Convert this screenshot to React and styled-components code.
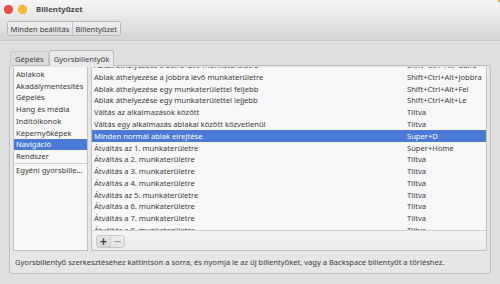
import React from "react";
import styled, { createGlobalStyle } from "styled-components";

const Global = createGlobalStyle`
  html, body { margin: 0; padding: 0; }
  body {
    width: 500px; height: 284px; overflow: hidden;
    background: #dfdfdf;
    font-family: "Noto Sans", "DejaVu Sans", sans-serif;
  }
`;

const Window = styled.div`
  width: 500px;
  height: 284px;
  display: flex;
  flex-direction: column;
  background: #dfdfdf;
  color: #3c3c3c;
  font-size: 7.6px;
  position: relative;
  overflow: hidden;
`;

const Header = styled.header`
  height: 41px;
  box-sizing: border-box;
  background: linear-gradient(#f6f6f6, #d4d4d4);
  border-bottom: 1px solid #c6c6c6;
  display: flex;
  flex-direction: column;
  padding: 4px 0 0 4px;
`;

const TitleRow = styled.div`
  display: flex;
  align-items: center;
  height: 10px;
  gap: 5px;
`;

const Dot = styled.span`
  width: 9px;
  height: 9px;
  border-radius: 50%;
  background: ${(p) => p.$color};
  box-shadow: inset 0 0 0 0.5px rgba(0,0,0,0.15);
`;

const Title = styled.span`
  font-weight: bold;
  color: #4a4a4a;
  font-size: 7.8px;
  margin-left: 4px;
`;

const Crumbs = styled.div`
  display: flex;
  margin-top: 7px;
  margin-left: 3px;
  height: 15px;
  align-self: flex-start;
  border: 1px solid #b9b9b9;
  border-radius: 3px;
  box-sizing: border-box;
  overflow: hidden;
`;

const Crumb = styled.button`
  all: unset;
  padding: 0 2.5px;
  display: flex;
  align-items: center;
  font-family: inherit;
  font-size: 7.6px;
  color: #3c3c3c;
  background: linear-gradient(#efefef, #dedede);
  & + & { border-left: 1px solid #c4c4c4; }
`;

const Content = styled.main`
  flex: 1;
  display: flex;
  flex-direction: column;
  padding: 8px 9px 10px 9px;
`;

const Tabs = styled.div`
  display: flex;
  align-items: flex-end;
  height: 16px;
  padding-left: 1px;
`;

const Tab = styled.div`
  height: ${(p) => (p.$active ? 16 : 14)}px;
  box-sizing: border-box;
  padding: 0 4px;
  display: flex;
  align-items: center;
  border: 1px solid ${(p) => (p.$active ? "#bcbcbc" : "#c8c8c8")};
  border-bottom: none;
  border-radius: 3px 3px 0 0;
  background: ${(p) => (p.$active ? "#e9e9e9" : "#dcdcdc")};
  color: #3c3c3c;
  margin-bottom: ${(p) => (p.$active ? -1 : 0)}px;
  position: relative;
  z-index: ${(p) => (p.$active ? 2 : 1)};
`;

const Frame = styled.section`
  flex: 1;
  border: 1px solid #bcbcbc;
  border-radius: 3px;
  background: #e6e6e6;
  display: flex;
  flex-direction: column;
  padding: 1px 3px 0 3px;
`;

const Panes = styled.div`
  display: flex;
  gap: 3px;
  height: 184px;
`;

const SideList = styled.ul`
  list-style: none;
  margin: 0;
  padding: 1px 0 0 0;
  width: 75px;
  box-sizing: border-box;
  background: #f7f7f7;
  border: 1px solid #c2c2c2;
  border-top: none;
  overflow: hidden;
`;

const SideItem = styled.li`
  height: 11.75px;
  display: flex;
  align-items: center;
  padding-left: 2px;
  white-space: nowrap;
  overflow: hidden;
  background: ${(p) => (p.$selected ? "#4a7ad6" : "transparent")};
  color: ${(p) => (p.$selected ? "#ffffff" : "#3c3c3c")};
`;

const SideSep = styled.li`
  height: 1px;
  background: #d0d0d0;
  margin: 0.5px 0;
`;

const MainPane = styled.div`
  flex: 1;
  display: flex;
  flex-direction: column;
  border: 1px solid #c2c2c2;
  border-top: none;
`;

const ListBox = styled.div`
  height: 164px;
  background: #f7f7f7;
  overflow: hidden;
  border-bottom: 1px solid #cfcfcf;
  box-sizing: border-box;
`;

const Rows = styled.div`
  margin-top: -7.7px;
`;

const Row = styled.div`
  height: 11.77px;
  display: grid;
  grid-template-columns: 313px 1fr;
  align-items: center;
  padding-left: 2px;
  white-space: nowrap;
  background: ${(p) => (p.$selected ? "#4a7ad6" : "transparent")};
  color: ${(p) => (p.$selected ? "#ffffff" : "#3c3c3c")};
`;

const Cell = styled.span`
  overflow: hidden;
`;

const Toolbar = styled.div`
  flex: 1;
  background: linear-gradient(#f3f3f3, #ececec);
  display: flex;
  align-items: center;
  padding-left: 4px;
`;

const BtnGroup = styled.div`
  display: flex;
  border: 1px solid #c8c8c8;
  border-radius: 3px;
  overflow: hidden;
  height: 13px;
  box-sizing: border-box;
  margin-top: 1px;
`;

const ToolBtn = styled.button`
  all: unset;
  width: 13px;
  display: flex;
  align-items: center;
  justify-content: center;
  background: ${(p) => (p.$dim ? "linear-gradient(#ececec,#e2e2e2)" : "linear-gradient(#e6e6e6,#d6d6d6)")};
  color: ${(p) => (p.$dim ? "#a0a0a0" : "#3a3a3a")};
  font-family: "DejaVu Sans", sans-serif;
  font-size: 10px;
  font-weight: bold;
  & + & { border-left: 1px solid #d0d0d0; }
`;

const Help = styled.p`
  margin: 0;
  flex: 1;
  display: flex;
  align-items: center;
  padding-left: 2px;
  color: #3c3c3c;
  font-size: 7.55px;
`;

const Corner = styled.span`
  position: absolute;
  top: 0;
  right: 0;
  width: 2px;
  height: 2px;
  background: #f0a040;
`;

const categories = [
  "Ablakok",
  "Akadálymentesítés",
  "Gépelés",
  "Hang és média",
  "Indítóikonok",
  "Képernyőképek",
  "Navigáció",
  "Rendszer",
];

const rows = [
  ["Ablak áthelyezése a balra lévő munkaterületre", "Shift+Ctrl+Alt+Balra"],
  ["Ablak áthelyezése a jobbra lévő munkaterületre", "Shift+Ctrl+Alt+Jobbra"],
  ["Ablak áthelyezése egy munkaterülettel feljebb", "Shift+Ctrl+Alt+Fel"],
  ["Ablak áthelyezése egy munkaterülettel lejjebb", "Shift+Ctrl+Alt+Le"],
  ["Váltás az alkalmazások között", "Tiltva"],
  ["Váltás egy alkalmazás ablakai között közvetlenül", "Tiltva"],
  ["Minden normál ablak elrejtése", "Super+D", true],
  ["Átváltás az 1. munkaterületre", "Super+Home"],
  ["Átváltás a 2. munkaterületre", "Tiltva"],
  ["Átváltás a 3. munkaterületre", "Tiltva"],
  ["Átváltás a 4. munkaterületre", "Tiltva"],
  ["Átváltás az 5. munkaterületre", "Tiltva"],
  ["Átváltás a 6. munkaterületre", "Tiltva"],
  ["Átváltás a 7. munkaterületre", "Tiltva"],
  ["Átváltás a 8. munkaterületre", "Tiltva"],
];

export default function App() {
  return (
    <Window>
      <Global />
      <Corner />
      <Header>
        <TitleRow>
          <Dot $color="#ef4b45" />
          <Dot $color="#f7bb2f" />
          <Title>Billentyűzet</Title>
        </TitleRow>
        <Crumbs>
          <Crumb>Minden beállítás</Crumb>
          <Crumb>Billentyűzet</Crumb>
        </Crumbs>
      </Header>
      <Content>
        <Tabs>
          <Tab>Gépelés</Tab>
          <Tab $active>Gyorsbillentyűk</Tab>
        </Tabs>
        <Frame>
          <Panes>
            <SideList>
              {categories.map((c) => (
                <SideItem key={c} $selected={c === "Navigáció"}>
                  {c}
                </SideItem>
              ))}
              <SideSep />
              <SideItem>Egyéni gyorsbille…</SideItem>
            </SideList>
            <MainPane>
              <ListBox>
                <Rows>
                  {rows.map(([a, b, sel]) => (
                    <Row key={a} $selected={sel}>
                      <Cell>{a}</Cell>
                      <Cell>{b}</Cell>
                    </Row>
                  ))}
                </Rows>
              </ListBox>
              <Toolbar>
                <BtnGroup>
                  <ToolBtn>+</ToolBtn>
                  <ToolBtn $dim>−</ToolBtn>
                </BtnGroup>
              </Toolbar>
            </MainPane>
          </Panes>
          <Help>
            Gyorsbillentyű szerkesztéséhez kattintson a sorra, és nyomja le az új billentyűket, vagy a Backspace billentyűt a törléshez.
          </Help>
        </Frame>
      </Content>
    </Window>
  );
}
